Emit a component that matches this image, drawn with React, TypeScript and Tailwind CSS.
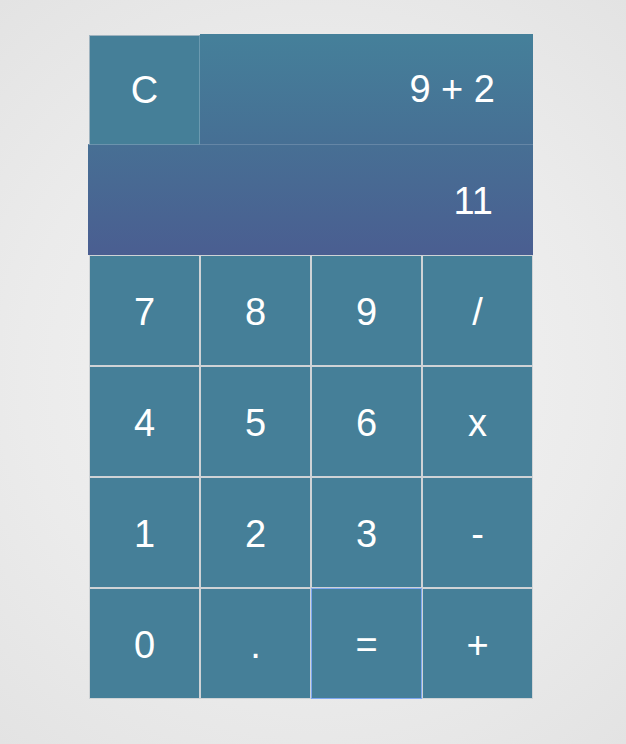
import React from "react";

const keys = ["7", "8", "9", "/", "4", "5", "6", "x", "1", "2", "3", "-", "0", ".", "=", "+"];

export default function App() {
  return (
    <div
      className="min-h-screen w-full flex pl-[88px] pt-[34px] bg-[radial-gradient(circle_at_center,#f4f4f4_0%,#ebebeb_60%,#e3e3e3_100%)]"
      style={{ fontFamily: '"Liberation Sans", Arial, sans-serif' }}
    >
      <div className="w-[445px] h-[664px] text-white text-[38px] leading-none">
        <div className="flex h-[110px]">
          <div className="ml-px mt-px w-[111px] h-[110px] flex items-center justify-center bg-[#457f98] border border-[#9fb3bf] border-r-[#6b9ab0] border-b-[#6b93ad]">
            C
          </div>
          <div className="flex-1 h-[110px] flex items-center justify-end pr-[38px] bg-[linear-gradient(to_bottom,#45809a,#466f94)]">
            9 + 2
          </div>
        </div>
        <div className="h-[111px] flex items-center justify-end pr-[40px] pt-[2px] bg-[linear-gradient(to_bottom,#476f94,#4a5e91)] border-t border-[#6586a6]">
          11
        </div>
        <div className="ml-px grid grid-cols-4 w-[444px]">
          {keys.map((k) => (
            <div
              key={k}
              className={
                "h-[111px] flex items-center justify-center pt-[2px] bg-[#457f98] border " +
                (k === "=" ? "border-[#7fa8f0]" : "border-[#cfd3d6]")
              }
            >
              {k}
            </div>
          ))}
        </div>
      </div>
    </div>
  );
}
